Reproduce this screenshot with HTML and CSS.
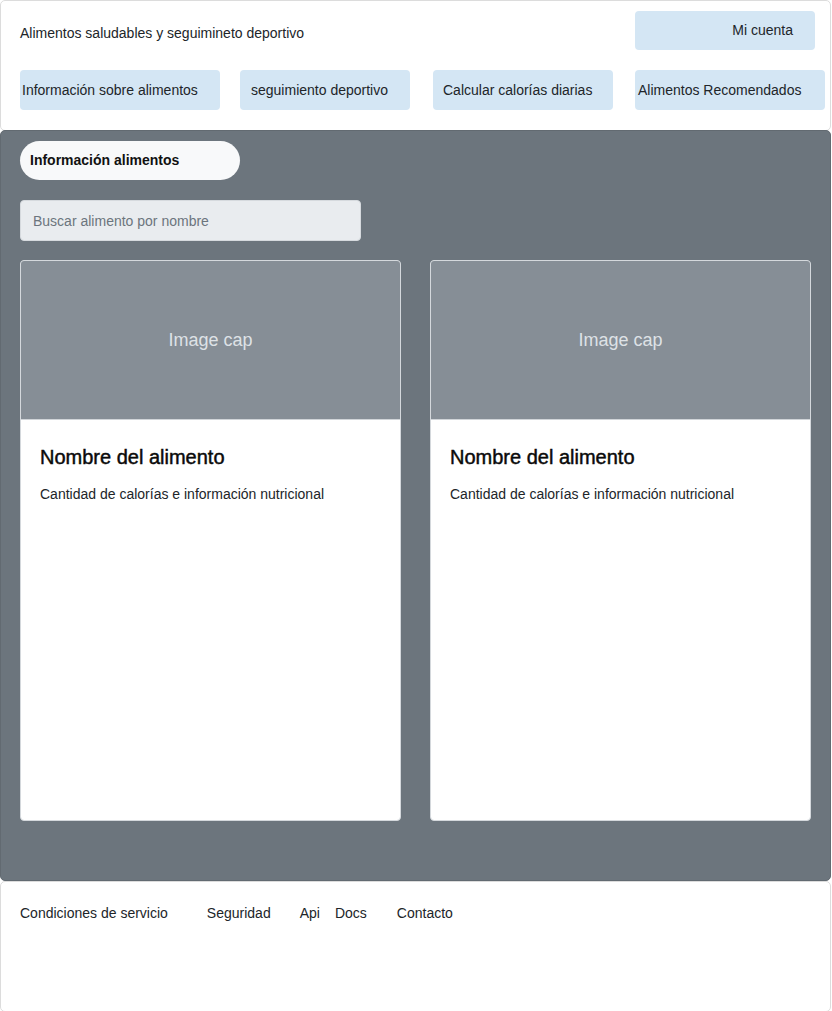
FILE: index.html
```html
<!DOCTYPE html>
<html lang="es">
<head>
<meta charset="utf-8">
<title>Alimentos saludables</title>
<link rel="stylesheet" href="styles.css">
</head>
<body>
<div class="page">
  <header class="header">
    <div class="top-row">
      <div class="site-title">Alimentos saludables y seguimineto deportivo</div>
      <a class="account-btn">Mi cuenta</a>
    </div>
    <nav class="nav">
      <a class="nav-btn nav-btn--a">Información sobre alimentos</a>
      <a class="nav-btn nav-btn--b">seguimiento deportivo</a>
      <a class="nav-btn nav-btn--c">Calcular calorías diarias</a>
      <a class="nav-btn nav-btn--d">Alimentos Recomendados</a>
    </nav>
  </header>

  <main class="main">
    <div class="pill">Información alimentos</div>
    <input class="search" type="text" placeholder="Buscar alimento por nombre">
    <div class="cards">
      <div class="card">
        <div class="card-img">Image cap</div>
        <div class="card-body">
          <h5 class="card-title">Nombre del alimento</h5>
          <p class="card-text">Cantidad de calorías e información nutricional</p>
        </div>
      </div>
      <div class="card">
        <div class="card-img">Image cap</div>
        <div class="card-body">
          <h5 class="card-title">Nombre del alimento</h5>
          <p class="card-text">Cantidad de calorías e información nutricional</p>
        </div>
      </div>
    </div>
  </main>

  <footer class="footer">
    <a class="foot-link">Condiciones de servicio</a>
    <a class="foot-link foot-link--seg">Seguridad</a>
    <a class="foot-link foot-link--api">Api</a>
    <a class="foot-link foot-link--docs">Docs</a>
    <a class="foot-link foot-link--contact">Contacto</a>
  </footer>
</div>
</body>
</html>
```

FILE: styles.css
```css
* { box-sizing: border-box; }

html, body {
  margin: 0;
  padding: 0;
  background: #ffffff;
}

body {
  font-family: "Liberation Sans", Arial, sans-serif;
  font-size: 14px;
  line-height: 20px;
  color: #212529;
}

.page {
  width: 831px;
}

/* Header */
.header {
  background: #ffffff;
  border: 1px solid #dcdcdc;
  border-radius: 5px;
  padding: 10px 15px 20px 19px;
  height: 131px;
}

.top-row {
  display: flex;
  justify-content: space-between;
  align-items: flex-start;
  height: 39px;
}

.site-title {
  margin-top: 12px;
  color: #212529;
}

.account-btn {
  display: block;
  width: 180px;
  height: 39px;
  line-height: 39px;
  background: #d4e6f4;
  border-radius: 4px;
  text-align: right;
  padding-right: 22px;
  color: #212529;
}

.nav {
  display: flex;
  margin-top: 20px;
}

.nav-btn {
  display: block;
  flex: none;
  height: 40px;
  line-height: 40px;
  background: #d4e6f4;
  border-radius: 4px;
  color: #212529;
  white-space: nowrap;
}

.nav-btn--a { width: 200px; padding-left: 2px; }
.nav-btn--b { width: 170px; padding-left: 11px; margin-left: 20px; }
.nav-btn--c { width: 180px; padding-left: 10px; margin-left: 23px; }
.nav-btn--d { width: 190px; padding-left: 3px; margin-left: 22px; }

/* Main */
.main {
  background: #6c757d;
  border: 1px solid #626a71;
  border-radius: 5px;
  margin-top: -1px;
  height: 751px;
  padding: 10px 19px 0 19px;
}

.pill {
  width: 220px;
  height: 39px;
  line-height: 39px;
  border-radius: 20px;
  background: #f8f9fa;
  font-weight: bold;
  padding-left: 10px;
  color: #111;
}

.search {
  display: block;
  margin-top: 20px;
  width: 341px;
  height: 41px;
  background: #e9ecef;
  border: 1px solid #d6dade;
  border-radius: 4px;
  padding: 0 12px;
  font-family: "Liberation Sans", Arial, sans-serif;
  font-size: 14px;
  color: #495057;
  outline: none;
}

.search::placeholder {
  color: #6c757d;
}

.cards {
  display: grid;
  grid-template-columns: 381px 381px;
  column-gap: 29px;
  margin-top: 19px;
}

.card {
  background: #ffffff;
  border: 1px solid #d4d8dc;
  border-radius: 4px;
  height: 561px;
  overflow: hidden;
}

.card-img {
  height: 159px;
  background: #868e96;
  border-bottom: 1px solid #d0d4d8;
  color: #dee2e6;
  font-size: 18px;
  display: flex;
  align-items: center;
  justify-content: center;
}

.card-body {
  padding: 25px 19px 20px 19px;
}

.card-title {
  margin: 0 0 15px 0;
  font-size: 20px;
  line-height: 24px;
  font-weight: 500;
  color: #0a0a0a;
  -webkit-text-stroke: 0.45px #0a0a0a;
}

.card-text {
  margin: 0;
  line-height: 21px;
  color: #212529;
}

/* Footer */
.footer {
  background: #ffffff;
  border: 1px solid #dcdcdc;
  border-radius: 5px;
  height: 131px;
  padding: 21px 19px 0 19px;
  display: flex;
  align-items: flex-start;
}

.foot-link {
  color: #212529;
  white-space: nowrap;
}

.foot-link--seg { margin-left: 39px; }
.foot-link--api { margin-left: 29px; }
.foot-link--docs { margin-left: 15px; }
.foot-link--contact { margin-left: 30px; }
```
